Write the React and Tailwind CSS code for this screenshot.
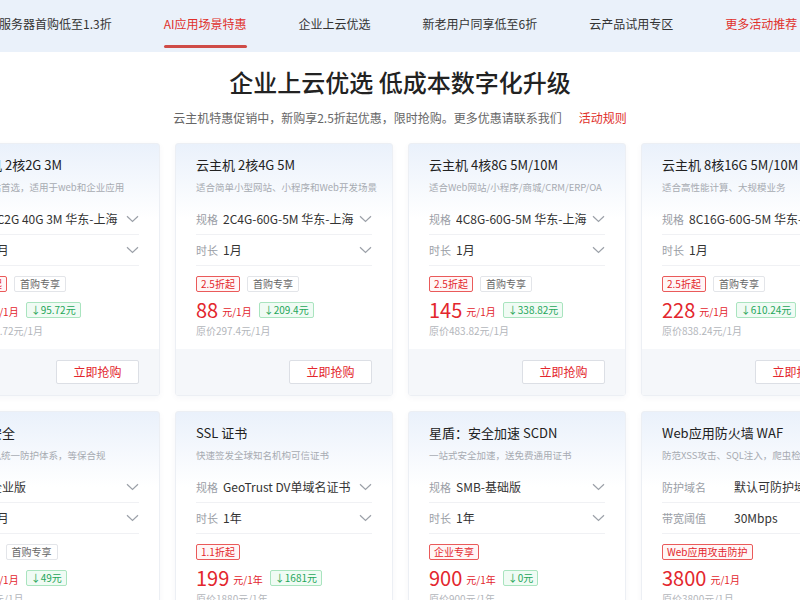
import React from 'react';

const tabs = [
  { label: '云服务器首购低至1.3折' },
  { label: 'AI应用场景特惠', active: true },
  { label: '企业上云优选' },
  { label: '新老用户同享低至6折' },
  { label: '云产品试用专区' },
  { label: '更多活动推荐', red: true },
];

const row1 = [
  {
    title: '云主机 2核2G 3M',
    desc: '入门建站首选，适用于web和企业应用',
    rows: [['规格', '2C2G 40G 3M 华东-上海'], ['时长', '1月']],
    tags: ['2.5折起', '首购专享'],
    price: '99', unit: '元/1月', save: '95.72元', orig: '原价194.72元/1月',
  },
  {
    title: '云主机 2核4G 5M',
    desc: '适合简单小型网站、小程序和Web开发场景',
    rows: [['规格', '2C4G-60G-5M 华东-上海'], ['时长', '1月']],
    tags: ['2.5折起', '首购专享'],
    price: '88', unit: '元/1月', save: '209.4元', orig: '原价297.4元/1月',
  },
  {
    title: '云主机 4核8G 5M/10M',
    desc: '适合Web网站/小程序/商城/CRM/ERP/OA',
    rows: [['规格', '4C8G-60G-5M 华东-上海'], ['时长', '1月']],
    tags: ['2.5折起', '首购专享'],
    price: '145', unit: '元/1月', save: '338.82元', orig: '原价483.82元/1月',
  },
  {
    title: '云主机 8核16G 5M/10M',
    desc: '适合高性能计算、大规模业务',
    rows: [['规格', '8C16G-60G-5M 华东-上海'], ['时长', '1月']],
    tags: ['2.5折起', '首购专享'],
    price: '228', unit: '元/1月', save: '610.24元', orig: '原价838.24元/1月',
  },
];

const row2 = [
  {
    title: '主机安全',
    desc: '云上主机统一防护体系，等保合规',
    rows: [['规格', '企业版'], ['时长', '1月']],
    tags: ['2折起', '首购专享'],
    price: '49', unit: '元/1月', save: '49元', orig: '原价98元/1月',
  },
  {
    title: 'SSL 证书',
    desc: '快速签发全球知名机构可信证书',
    rows: [['规格', 'GeoTrust DV单域名证书'], ['时长', '1年']],
    tags: ['1.1折起'],
    price: '199', unit: '元/1年', save: '1681元', orig: '原价1880元/1年',
  },
  {
    title: '星盾：安全加速 SCDN',
    desc: '一站式安全加速，送免费通用证书',
    rows: [['规格', 'SMB-基础版'], ['时长', '1年']],
    tags: ['企业专享'],
    price: '900', unit: '元/1年', save: '0元', orig: '原价900元/1年',
  },
  {
    title: 'Web应用防火墙 WAF',
    desc: '防范XSS攻击、SQL注入，爬虫检测等',
    rows: [['防护域名', '默认可防护域名数10个'], ['带宽阈值', '30Mbps']],
    wide: true,
    tags: ['Web应用攻击防护'],
    price: '3800', unit: '元/1月', orig: '原价3800元/1月',
  },
];

const Chevron = () => (
  <svg width="13" height="8" viewBox="0 0 13 8" fill="none" className="shrink-0">
    <path d="M1 1.2l5.5 5.3L12 1.2" stroke="#9ca1a9" strokeWidth="1.2" />
  </svg>
);

const Card = ({ title, desc, rows, wide, tags, price, unit, save, orig }) => (
  <div className="w-[218px] shrink-0 rounded-[3px] border border-[#eceff4] bg-[linear-gradient(180deg,#eaf1fb_0%,#ffffff_75px)] shadow-[0_2px_6px_rgba(30,50,90,0.04)] overflow-hidden">
    <div className="px-5 pt-3">
      <div className="text-[13px] leading-[18px] text-[#222] whitespace-nowrap">{title}</div>
      <div className="mt-[5px] text-[9.5px] leading-[16px] text-[#a7abb2] whitespace-nowrap">{desc}</div>
      <div className="mt-[9px]">
        {rows.map(([label, value]) => (
          <div key={label} className="flex items-center h-[31px] border-b border-[#f0f1f4]">
            <span className={`${wide ? 'w-[72px]' : 'w-[27px]'} shrink-0 text-[11px] text-[#9a9ea6] whitespace-nowrap`}>{label}</span>
            <span className="flex-1 text-[12px] text-[#333] whitespace-nowrap overflow-hidden">{value}</span>
            <Chevron />
          </div>
        ))}
      </div>
      <div className="mt-[10px] flex gap-[7px]">
        {tags.map((t, i) => (
          <span
            key={t}
            className={
              i === 0
                ? 'h-[16px] px-[4px] text-[10px] leading-[14px] border border-[#ea5a5a] bg-[#fff6f6] text-[#e3262d] rounded-[2px] whitespace-nowrap'
                : 'h-[16px] px-[5px] text-[10px] leading-[14px] border border-[#e3e5e9] bg-white text-[#666] rounded-[2px] whitespace-nowrap'
            }
          >
            {t}
          </span>
        ))}
      </div>
      <div className="mt-[6px] flex items-center h-[24px] whitespace-nowrap">
        <span className="text-[20px] leading-none text-[#e3262d]">{price}</span>
        <span className="ml-[4px] text-[10px] text-[#e3262d] mt-[3px]">{unit}</span>
        {save && (
          <span className="ml-[7px] h-[16px] px-[4px] text-[10px] leading-[14px] border border-[#a9e4bf] bg-[#f0fbf4] text-[#1fa65a] rounded-[2px]">
            ↓{save}
          </span>
        )}
      </div>
      <div className="mt-[2px] text-[10px] leading-[14px] text-[#b3b6bb] whitespace-nowrap">{orig}</div>
    </div>
    <div className="mt-[11px] h-[46px] bg-[#f5f7fa] flex items-center justify-end px-5">
      <button className="w-[83px] h-[24px] border border-[#dcdfe5] bg-white text-[12px] text-[#e3262d] rounded-[2px]">
        立即抢购
      </button>
    </div>
  </div>
);

export default function App() {
  return (
    <div className="w-[800px] h-[600px] overflow-hidden bg-white font-['Noto_Sans_CJK_SC','Noto_Sans',sans-serif]">
      <nav className="h-[52px] bg-[#eaf1fa] flex gap-[52px] ml-[-13px] whitespace-nowrap">
        {tabs.map((t) => (
          <div key={t.label} className="h-full flex flex-col justify-end">
            <span
              className={`text-[12px] leading-[18px] ${
                t.active || t.red ? 'text-[#e0302b]' : 'text-[#333]'
              }`}
            >
              {t.label}
            </span>
            <div className={`mt-[12px] mb-[4px] h-[3px] rounded-full ${t.active ? 'bg-[#cf4b46]' : 'bg-transparent'}`} />
          </div>
        ))}
      </nav>

      <h1 className="mt-[14px] text-center text-[24px] leading-[32px] font-medium text-[#222]">
        企业上云优选 低成本数字化升级
      </h1>
      <div className="mt-[11px] flex justify-center gap-[17px] text-[12px] leading-[18px]">
        <span className="text-[#666]">云主机特惠促销中，新购享2.5折起优惠，限时抢购。更多优惠请联系我们</span>
        <span className="text-[#e0302b]">活动规则</span>
      </div>

      <div className="mt-[16px] ml-[-58px] flex flex-col gap-[15px]">
        <div className="flex gap-[15px]">
          {row1.map((c) => (
            <Card key={c.title} {...c} />
          ))}
        </div>
        <div className="flex gap-[15px]">
          {row2.map((c) => (
            <Card key={c.title} {...c} />
          ))}
        </div>
      </div>
    </div>
  );
}
